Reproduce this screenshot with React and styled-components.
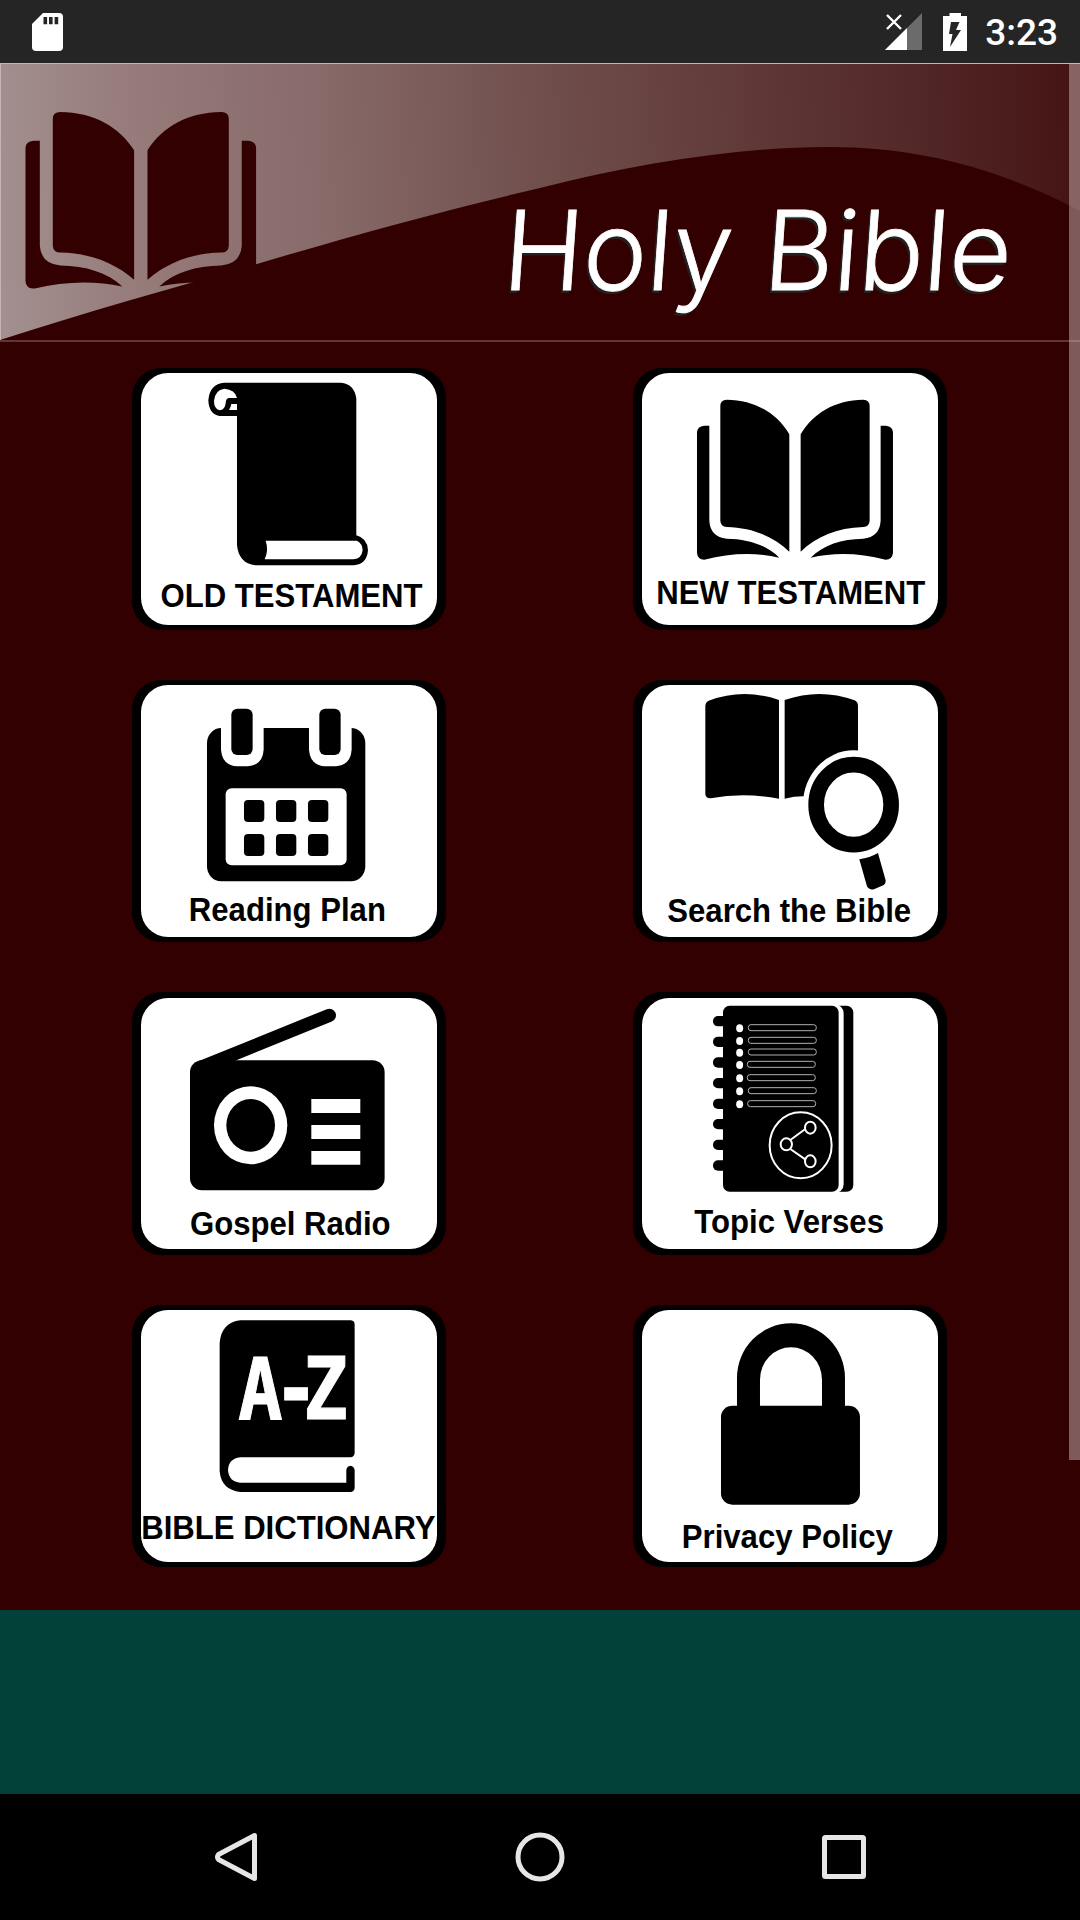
import React from 'react'
import styled, { createGlobalStyle } from 'styled-components'

const GlobalStyle = createGlobalStyle`
    body {
        margin: 0;
        background: #000;
    }
`

const Screen = styled.div`
    display: flex;
    flex-direction: column;
    width: 1080px;
    height: 1920px;
    overflow: hidden;
    background: #320000;
`

const StatusBar = styled.header`
    display: flex;
    align-items: center;
    justify-content: space-between;
    box-sizing: border-box;
    height: 63px;
    flex: none;
    padding: 0 22px 0 32px;
    background: #252525;
`

const StatusIcons = styled.div`
    display: flex;
    align-items: center;
`

const StatusIcon = styled.svg`
    display: block;
    margin-right: ${props => props.$gap || 0}px;
`

const Clock = styled.span`
    color: #fff;
    font-family: Roboto, sans-serif;
    font-size: 37px;
    font-weight: 500;
    line-height: 40px;
    padding-top: 3px;
`

const Content = styled.main`
    position: relative;
    height: 1547px;
    flex: none;
`

const ScrollThumb = styled.div`
    position: absolute;
    top: 0;
    right: 0;
    width: 11px;
    height: 1397px;
    background: rgba(209, 189, 189, 0.48);
`

const Banner = styled.section`
    display: grid;
    height: 279px;
`

const BannerArt = styled.svg`
    grid-area: 1 / 1;
    display: block;
`

const Title = styled.h1`
    grid-area: 1 / 1;
    display: flex;
    justify-content: flex-end;
    gap: 26px;
    margin: 0;
    padding: 121px 74px 0 0;
    color: #fff;
    font-family: Inter, sans-serif;
    font-size: 110px;
    font-weight: 300;
    line-height: 133px;
    -webkit-text-stroke: 0.8px #fff;
    text-shadow: -1px 1px 0 #24201f, -2px 3px 0 #24201f;
`

const Word = styled.span`
    display: block;
    transform: skewX(-4deg) scaleX(${props => props.$stretch});
    transform-origin: right bottom;
`

const Menu = styled.nav`
    display: grid;
    grid-template-columns: 314px 314px;
    grid-auto-rows: 262.5px;
    column-gap: 187px;
    row-gap: 49.8px;
    padding: 25.7px 0 0 132px;
`

const Card = styled.a`
    display: flex;
    flex-direction: column;
    align-items: center;
    box-sizing: border-box;
    padding: 5.5px 9.5px 5.5px 8.5px;
    border-radius: 29px;
    background: #000;
    text-decoration: none;
`

const Face = styled.div`
    display: flex;
    flex-direction: column;
    align-items: center;
    width: 100%;
    height: 100%;
    border-radius: 27px;
    background: #fff;
`

const Art = styled.svg`
    display: block;
    width: 295.3px;
    height: 200px;
    flex: none;
    overflow: visible;
`

const Label = styled.span`
    margin-top: ${props => props.$drop}px;
    color: #000;
    font-family: 'Liberation Sans', Arial, sans-serif;
    font-size: 34px;
    font-weight: 700;
    line-height: 36px;
    white-space: nowrap;
    transform: translateX(${props => props.$shift || 0}px) scaleX(0.915);
`

const AdSlot = styled.div`
    height: 184px;
    flex: none;
    background: #02403a;
`

const NavBar = styled.footer`
    display: flex;
    align-items: center;
    justify-content: space-between;
    box-sizing: border-box;
    height: 126px;
    padding: 0 210px 0 210px;
    background: #000;
`

const NavIcon = styled.svg`
    display: block;
    width: 52px;
    height: 52px;
    fill: none;
    stroke: #e6e6e6;
    stroke-width: 5;
    stroke-linejoin: round;
`

const BookHalf = () => (
    <>
        <path d="M508 590V238C470 174 405 135 320 134Q301 135 301 152V497Q302 515 320 516C400 518 460 545 508 590Z" />
        <path d="M268 212H252Q232 214 231 232V594Q233 614 253 614C330 594 405 591 478 608C440 570 385 552 320 551Q271 546 268 497Z" />
    </>
)

const Book = () => (
    <>
        <BookHalf />
        <g transform="translate(1050 0) scale(-1 1)">
            <BookHalf />
        </g>
    </>
)

const Scroll = () => (
    <>
        <path d="M312 83H662Q702 87 708 130V541Q742 550 743 586Q740 628 700 631H405Q355 625 350 570V183H297Q266 178 264 136Q268 86 312 83Z" />
        <path fill="#fff" d="M312 101Q345 104 350 129H325Q317 130 316 145Q314 165 298 166Q281 162 281 138Q284 104 312 101Z" />
        <path fill="#fff" d="M333 147H350V165H326Q331 158 333 147Z" />
        <path fill="#fff" d="M436 557H710Q727 566 727 586Q724 611 700 613H433Q446 585 436 557Z" />
    </>
)

const Calendar = () => (
    <>
        <rect x="260" y="175" width="475" height="460" rx="43" ry="45" />
        {[0, 264].map(dx => (
            <g key={dx} transform={`translate(${dx} 0)`}>
                <path fill="#fff" d="M302 165V240Q306 287 350 290H382Q427 286 430 240V165Z" />
                <rect x="333" y="117" width="64" height="139" rx="18" />
            </g>
        ))}
        <rect x="316" y="356" width="363" height="231" rx="18" fill="#fff" />
        {[391, 493].map(y =>
            [371, 467, 563].map(x => <rect key={`${x}-${y}`} x={x} y={y} width="61" height="66" rx="12" />)
        )}
    </>
)

const BookSearch = () => (
    <>
        <path d="M256 110Q256 98 266 93Q370 54 477 91V387Q370 367 272 386Q258 387 256 374Z" />
        <path d="M494 91Q600 54 704 92Q714 98 714 108V380H550Q522 380 494 387Z" />
        <ellipse cx="701" cy="405" rx="152" ry="163" fill="#fff" />
        <ellipse cx="701" cy="405" rx="112.5" ry="120" fill="none" stroke="#000" strokeWidth="47" />
        <path d="M718 569Q750 564 774 550L797 632Q798 642 790 647L762 659Q746 661 741 650Z" />
    </>
)

const Radio = () => (
    <>
        <rect x="209" y="241" width="584" height="390" rx="36" />
        <path d="M245 261L627 106" stroke="#000" strokeWidth="40" strokeLinecap="round" />
        <ellipse cx="391" cy="436" rx="110" ry="117" fill="#fff" />
        <ellipse cx="391" cy="436" rx="73" ry="79" />
        <path fill="#fff" d="M573 357h147v42h-147zM573 435h147v42h-147zM573 513h147v41h-147z" />
    </>
)

const noteLines = [
    [385, 134],
    [385, 172],
    [385, 207],
    [382, 244],
    [382, 284],
    [385, 323],
    [383, 362],
]

const Notebook = () => (
    <>
        {[108, 170, 232, 294, 356, 417, 479, 541].map(y => (
            <rect key={y} x="279" y={y} width="46" height="31" rx="15" />
        ))}
        <rect x="600" y="77" width="100" height="558" rx="20" />
        <rect x="560" y="73" width="111" height="566" rx="26" fill="#fff" />
        <rect x="309" y="77" width="347" height="558" rx="20" />
        {noteLines.map(([x, y]) => (
            <g key={y}>
                <ellipse cx="359" cy={y + 11} rx="10.5" ry="12" fill="#fff" />
                <rect x={x} y={y} width="204" height="18" rx="8" fill="none" stroke="#b0b0b0" strokeWidth="3" />
            </g>
        ))}
        <g fill="none" stroke="#fff" strokeWidth="6">
            <ellipse cx="542" cy="496" rx="93" ry="99" />
            <ellipse cx="499" cy="493" rx="17" ry="18" />
            <ellipse cx="571" cy="443" rx="16" ry="18" />
            <ellipse cx="571" cy="544" rx="16" ry="18" />
            <path d="M511 480L556 447M511 507L557 539" />
        </g>
    </>
)

const Dictionary = () => (
    <>
        <path d="M360 77H692Q703 78 703 90V475Q702 487 690 488H360Q325 492 323 526Q326 562 360 564H678V526Q680 514 690 513Q702 515 703 526V580Q702 591 690 592H360Q303 586 298 530V145Q303 84 360 77Z" />
        <text
            transform="scale(0.87 1)"
            x="406 529 631"
            y="372"
            fill="#fff"
            stroke="#fff"
            strokeWidth="3"
            fontFamily="'DejaVu Sans Mono', monospace"
            fontWeight="700"
            fontSize="256"
        >
            A-Z
        </text>
    </>
)

const Lock = () => (
    <>
        <path d="M351 345V250A162 164 0 0 1 675 250V345H606V255A93 97 0 0 0 420 255V345Z" />
        <rect x="303" y="333" width="417" height="297" rx="34" />
    </>
)

const items = [
    { label: 'OLD TESTAMENT', Icon: Scroll, box: '62 54 886 600', drop: 3.4, shift: 3.3 },
    { label: 'NEW TESTAMENT', Icon: Book, box: '66 54 886 600', drop: 0.7, shift: 1.8 },
    { label: 'Reading Plan', Icon: Calendar, box: '62 46 886 600', drop: 5.2, shift: -1.3 },
    { label: 'Search the Bible', Icon: BookSearch, box: '66 46 886 600', drop: 6.9, shift: 0 },
    { label: 'Gospel Radio', Icon: Radio, box: '62 54 886 600', drop: 7, shift: 1.7 },
    { label: 'Topic Verses', Icon: Notebook, box: '66 54 886 600', drop: 5.7, shift: -0.5 },
    { label: 'BIBLE DICTIONARY', Icon: Dictionary, box: '62 46 886 600', drop: -1.4, shift: -0.5 },
    { label: 'Privacy Policy', Icon: Lock, box: '66 46 886 600', drop: 8.2, shift: -2 },
]

const App = () => (
    <Screen>
        <GlobalStyle />
        <StatusBar>
            <StatusIcon width="31" height="38" viewBox="0 0 31 38">
                <path fill="#fff" d="M11 0H27Q31 0 31 4V34Q31 38 27 38H4Q0 38 0 34V11Z" />
                <path fill="#252525" d="M11.5 4h3.6v7.3h-3.6zM17 4h3.6v7.3H17zM22.6 4h3.6v7.3h-3.6z" />
            </StatusIcon>
            <StatusIcons>
                <StatusIcon width="37" height="37" viewBox="0 0 37 37" $gap={21}>
                    <path fill="#6b6b6b" d="M37 0V37H0Z" />
                    <path fill="#fff" d="M22 15V37H0Z" />
                    <path stroke="#252525" strokeWidth="5" d="M2 2L16 16" />
                    <path stroke="#fff" strokeWidth="2.4" d="M2 2L16 16M16 2L2 16" />
                </StatusIcon>
                <StatusIcon width="24" height="38" viewBox="0 0 24 38" $gap={18.5}>
                    <path fill="#fff" d="M6.5 0H18V3H24V38H0V3H6.5Z" />
                    <path fill="#252525" d="M8 9H16.5L13 17H18L7 34L9.5 21H6Z" />
                </StatusIcon>
                <Clock>3:23</Clock>
            </StatusIcons>
        </StatusBar>
        <Content>
            <Banner>
                <BannerArt width="1080" height="279" viewBox="0 63 1080 279">
                    <defs>
                        <linearGradient id="sheen" gradientUnits="userSpaceOnUse" x1="0" y1="200" x2="1080" y2="160">
                            <stop offset="0" stopColor="#a38f8f" />
                            <stop offset="0.12" stopColor="#967c7b" />
                            <stop offset="0.3" stopColor="#876a69" />
                            <stop offset="0.5" stopColor="#704f4d" />
                            <stop offset="0.7" stopColor="#603838" />
                            <stop offset="0.88" stopColor="#502424" />
                            <stop offset="1" stopColor="#441413" />
                        </linearGradient>
                    </defs>
                    <rect y="63" width="1080" height="279" fill="url(#sheen)" />
                    <svg x="25.3" y="112" width="231" height="176.7" viewBox="231 134 588 480" preserveAspectRatio="none" fill="#320000">
                        <Book />
                    </svg>
                    <path
                        fill="#320000"
                        d="M0 340C90 311 170 289 257 264C350 236 450 209 540 188C640 163 740 147 829 147C920 147 1000 169 1080 211V342H0Z"
                    />
                    <path fill="#c4b4b4" d="M0 63h1080v1H0zM0 63h1v277H0z" />
                    <path fill="#643434" d="M0 340h1080v2H0z" />
                </BannerArt>
                <Title>
                    <Word $stretch={0.98}>Holy</Word>
                    <Word $stretch={0.98}>Bible</Word>
                </Title>
            </Banner>
            <Menu>
                {items.map(({ label, Icon, box, drop, shift }) => (
                    <Card key={label}>
                        <Face>
                            <Art viewBox={box}>
                                <Icon />
                            </Art>
                            <Label $drop={drop} $shift={shift}>
                                {label}
                            </Label>
                        </Face>
                    </Card>
                ))}
            </Menu>
            <ScrollThumb />
        </Content>
        <AdSlot />
        <NavBar>
            <NavIcon viewBox="0 0 52 52">
                <path d="M44.5 4.5V47.5L8.5 28.5Q6.5 26 8.5 23.5Z" />
            </NavIcon>
            <NavIcon viewBox="0 0 52 52">
                <circle cx="26" cy="26" r="22" />
            </NavIcon>
            <NavIcon viewBox="0 0 52 52">
                <rect x="6.5" y="6.5" width="39" height="39" rx="1" />
            </NavIcon>
        </NavBar>
    </Screen>
)

export default App
